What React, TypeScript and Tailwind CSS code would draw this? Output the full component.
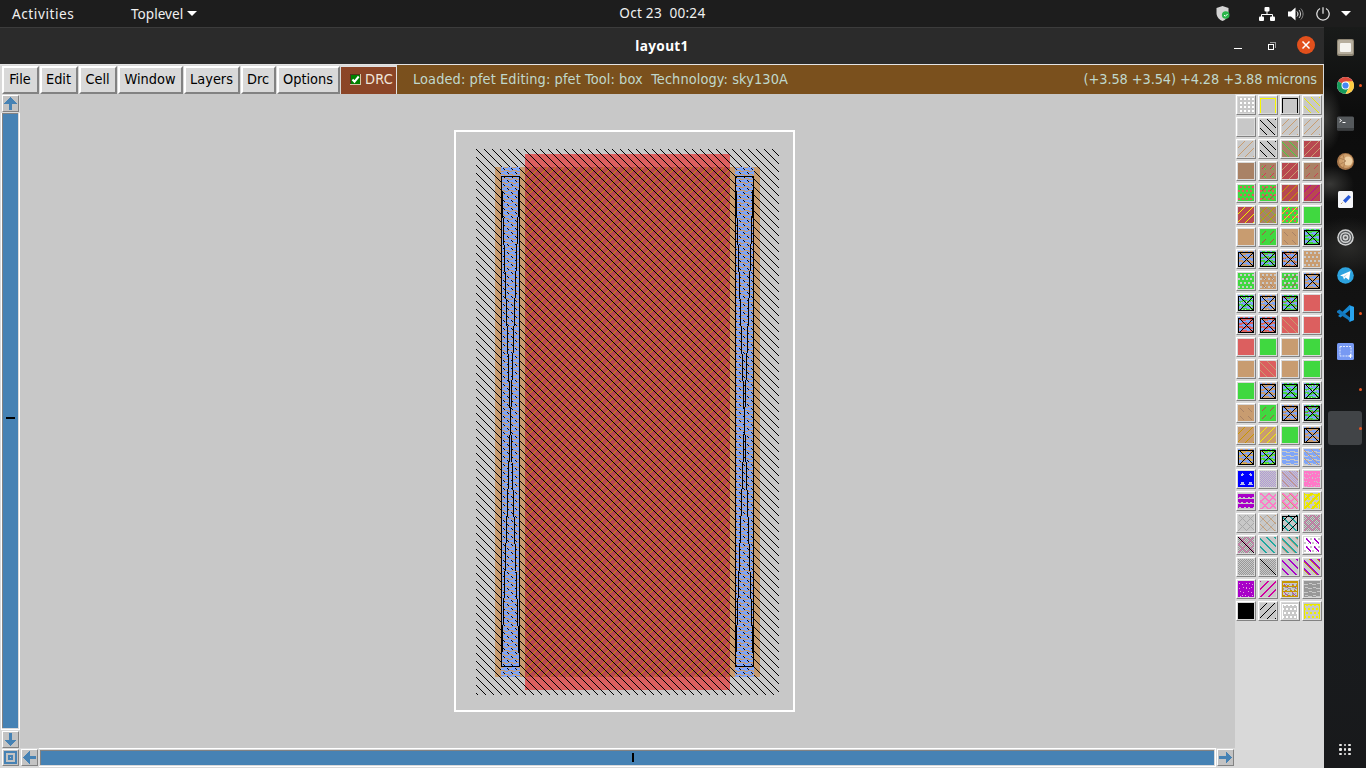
import React from "react";

type Test = (x: number, y: number) => boolean;
type Layer = [Test, string];

const GREY = "#c8c8c8";
const GREEN = "#40d840";
const TAN = "#c89c70";
const BROWN = "#a98266";
const RED = "#b84850";
const ROSE = "#dc5f5f";
const BLUE = "#7fa5f8";
const GOLD = "#c89600";
const YELLOW = "#f0f000";
const PURPLE = "#a800c8";
const PINK = "#ff78c8";
const TEAL = "#20a8a0";
const MID = "#989898";

const mod = (n: number, m: number) => ((n % m) + m) % m;
const back = (k = 7, w = 1, p = 8): Test => (x, y) => mod(x - y - k, p) < w;
const fwd = (k = 6, w = 1, p = 8): Test => (x, y) => mod(x + y - k, p) < w;
const shortFwd: Test = (x, y) => mod(x + y - 7, 8) === 0 && mod(x, 8) > 1 && mod(x, 8) < 6;
const shortBack: Test = (x, y) => mod(x - y - 7, 8) === 0 && mod(x, 8) > 1 && mod(x, 8) < 6;
const dots: Test = (x, y) => x % 4 >= 2 && y % 4 >= 1 && y % 4 <= 2;
const stagger: Test = (x, y) => mod(x + (Math.floor(y / 4) % 2) * 2, 4) >= 2 && (y + 3) % 4 < 2;
const wave: Test = (x, y) => {
  const s = x + (Math.floor(y / 4) % 2) * 4;
  return (y % 4 === 2 && s % 8 < 5) || (y % 4 === 3 && s % 8 >= 4);
};
const thickWave: Test = (x, y) => wave(x, y) || wave(x, y + 1);
const specks: Test = (x, y) => wave(x, y) && (x * 3 + y) % 5 < 2;
const checker: Test = (x, y) => (x + y) % 2 === 0;
const frame: Test = (x, y) => y === 1 || (y > 1 && (x === 0 || x === 15));
const box: Test = (x, y) => y === 1 || y === 15 || ((x === 0 || x === 15) && y >= 1);
const cross: Test = (x, y) => y >= 1 && (x === y || x + y === 16);
const hatch: Test = (x, y) => mod(x - y - 1, 8) === 0 || mod(x + y - 7, 8) === 0;
const thickHatch: Test = (x, y) => mod(x - y, 8) < 2 || mod(x + y, 8) < 2;
const one: Test = (x, y) => x === y;
const tri: Test = (x, y) => y % 8 > 1 && y % 8 < 6 && Math.abs((x % 8) - 4) < (y % 8) / 2 - 0.4;
const bars: Test = (x, y) => y % 5 === 0 || (y % 5 === 4 && (x * 7 + y) % 9 < 4);
const scatter: Test = (x, y) => (x * x + y * 5 + x * y) % 7 < 2;

const trace = (test: Test, size = 16) => {
  let d = "";
  for (let y = 0; y < size; y++)
    for (let x = 0; x < size; x++) if (test(x, y)) d += `M${x} ${y}h1v1h-1z`;
  return d;
};

const s = (base: string, ...layers: Layer[]) => ({ base, layers });
const c = (fill: string, ...extra: Layer[]) =>
  s(BLUE, [thickWave, fill], ...extra, [(x, y) => y < 1 && x % 5 > 1, fill], [box, "#000"], [cross, "#000"]);

const swatches = [
  s(GREY, [dots, "#fff"]), s(GREY, [frame, "#f8f800"]), s(GREY, [frame, "#000"]), s(GREY, [back(), "#e8e800"]),
  s(GREY), s(GREY, [back(), "#000"]), s(GREY, [fwd(), TAN]), s(GREY, [fwd(), TAN]),
  s(GREY, [fwd(), TAN]), s(GREY, [back(), "#000"]), s(BROWN, [back(), GREEN]), s(RED, [fwd(), TAN]),
  s(BROWN), s(BROWN, [shortBack, GREEN], [shortFwd, "#d04050"]), s(RED, [fwd(), TAN]), s(BROWN, [shortFwd, "#c84450"]),
  s(GREEN, [stagger, ROSE]), s(GREEN, [stagger, ROSE], [shortFwd, "#c04040"]), s(RED, [fwd(), GOLD]), s(RED, [fwd(), "#c000a0"]),
  s(RED, [fwd(), YELLOW]), s(BROWN, [fwd(), GOLD], [back(), "#78b840"]), s(GREEN, [stagger, ROSE], [fwd(), YELLOW]), s(GREEN),
  s(TAN), s(GREEN, [shortFwd, "#b84848"]), s(TAN, [shortBack, BROWN]), c(GREEN),
  c(TAN), c(GREEN, [specks, BROWN]), c(TAN, [specks, RED]), s(TAN, [stagger, GREY]),
  s(GREEN, [stagger, GREY]), s(TAN, [stagger, GREY], [shortBack, BROWN]), s(GREEN, [stagger, GREY], [shortFwd, RED]), c(TAN),
  c(GREEN, [specks, GREY]), c(TAN, [specks, GREY]), c(GREEN, [specks, ROSE]), s(ROSE),
  c(ROSE), c(ROSE, [specks, TAN]), s(ROSE, [back(), TAN]), s(ROSE),
  s(ROSE), s(GREEN), s(TAN), s(GREEN),
  s(TAN), s(ROSE, [back(), TAN]), s(TAN), s(GREEN),
  s(GREEN), c(TAN), c(GREEN), c(GREEN, [specks, GREY]),
  s(TAN, [shortBack, BROWN]), s(GREEN, [shortFwd, RED]), c(TAN, [specks, BROWN]), c(GREEN, [specks, RED]),
  s(TAN, [fwd(), GOLD]), s(TAN, [fwd(), YELLOW]), s(GREEN), c(TAN),
  c(TAN, [specks, "#e8c820"]), c(GREEN, [specks, "#c8e020"]), s(BLUE, [wave, GREY]), s(BLUE, [wave, GREY], [back(), TAN]),
  s("#0000ff", [tri, "#b8c0f0"], [bars, "#0000ff"]), s(GREY, [checker, "#b098d8"]), s(GREY, [checker, "#b098d8"], [back(), TAN]), s(PINK, [specks, GREY]),
  s(PURPLE, [bars, GREY]), s(GREY, [thickHatch, PINK]), s(GREY, [thickHatch, PINK], [back(), TAN]), s(GREY, [frame, "#e8e800"], [stagger, "#f0f000"], [fwd(6, 3), "#e8e000"]),
  s(GREY, [hatch, "#a8a8a8"]), s(GREY, [fwd(), "#b0b0b0"], [back(), TAN]), s(GREY, [back(6, 2), TEAL], [fwd(), "#000"], [frame, "#000"]), s(GREY, [checker, MID], [hatch, "#e070b0"]),
  s(GREY, [checker, MID], [hatch, "#e070b0"], [one, "#000"]), s(GREY, [back(6, 2), TEAL]), s(GREY, [back(6, 2), TEAL], [back(5), TAN]), s("#fff", [stagger, GREY], [back(7, 2), "#fff"], [(x, y) => mod(x - y, 8) < 2 && mod(x, 8) > 1 && mod(x, 8) < 7, PURPLE]),
  s(GREY, [checker, MID]), s(GREY, [checker, MID], [one, "#000"]), s(GREY, [back(6, 2), PURPLE]), s(GREY, [back(6, 2), PURPLE], [back(5), GOLD]),
  s(PURPLE, [(x, y) => specks(x, y) && x % 3 > 0, "#e0a0e0"]), s(GREY, [fwd(7, 2), "#d000a0"]), s(GREY, [scatter, MID], [shortBack, "#c040a0"], [frame, GOLD], [bars, GOLD]), s(GREY, [wave, MID], [(x, y) => y % 4 < 2, MID]),
  s("#000"), s(GREY, [fwd(), "#000"]), s(GREY, [stagger, "#fff"], [frame, "#fff"]), s(GREY, [stagger, YELLOW], [frame, "#e8e800"]),
];

function Swatch({ base, layers }: { base: string; layers: Layer[] }) {
  return (
    <div className="size-5 border border-t-white border-l-white border-r-[#828282] border-b-[#828282] bg-[#d9d9d9] p-px">
      <svg className="block size-4" viewBox="0 0 16 16" shapeRendering="crispEdges">
        <rect width="16" height="16" fill={base} />
        {layers.map(([test, color], i) => (
          <path key={i} d={trace(test)} fill={color} />
        ))}
      </svg>
    </div>
  );
}

function Contact({ x }: { x: number }) {
  return (
    <g>
      <rect x={x} y="167" width="19" height="510" fill={BLUE} />
      <rect x={x} y="167" width="19" height="510" fill="url(#metal)" />
      <g fill="none" stroke="#000">
        <rect x={x + 0.5} y="176.5" width="18" height="490" />
        <path d={`M${x + 0.5} 176.5L${x + 18.5} 666.5M${x + 18.5} 176.5L${x + 0.5} 666.5`} />
      </g>
    </g>
  );
}

function Canvas() {
  return (
    <svg className="block h-[654px] w-[1215px] bg-[#c8c8c8]" viewBox="20 94 1215 654" shapeRendering="crispEdges">
      <defs>
        <pattern id="well" width="8" height="8" patternUnits="userSpaceOnUse">
          <path d={trace(back(7), 8)} fill="#000" />
        </pattern>
        <pattern id="poly" width="8" height="8" patternUnits="userSpaceOnUse">
          <path d={trace(fwd(2), 8)} fill="#c88c00" />
        </pattern>
        <pattern id="metal" width="8" height="8" patternUnits="userSpaceOnUse">
          <path d={trace(wave, 8)} fill={TAN} />
          <path d={trace((x, y) => back(7)(x, y) && y % 4 < 2, 8)} fill="#000" />
        </pattern>
      </defs>
      <rect x="455" y="131" width="339" height="580" fill="none" stroke="#fff" strokeWidth="2" />
      <rect x="495" y="167" width="265" height="510" fill={TAN} />
      <rect x="525" y="154" width="205" height="536" fill={ROSE} />
      <rect x="525" y="167" width="205" height="510" fill={RED} />
      <rect x="525" y="167" width="205" height="510" fill="url(#poly)" />
      <rect x="476" y="149" width="303" height="546" fill="url(#well)" />
      <Contact x={501} />
      <Contact x={735} />
    </svg>
  );
}

const arrows: Record<string, string> = {
  up: "M7.5 1L14 7.5H9V14H6V7.5H1Z",
  down: "M7.5 14L14 7.5H9V1H6V7.5H1Z",
  left: "M1 7.5L7.5 1V6H14V9H7.5V14Z",
  right: "M14 7.5L7.5 1V6H1V9H7.5V14Z",
};

function ArrowButton({ kind }: { kind: string }) {
  return (
    <div className="size-[17px] shrink-0 border border-t-white border-l-white border-r-[#828282] border-b-[#828282] bg-[#c3c3c3]">
      <svg className="block size-[15px]" viewBox="0 0 15 15" shapeRendering="crispEdges">
        {kind === "zoom" ? (
          <g fill="none" stroke="#4682b4" strokeWidth="2">
            <rect x="2" y="2" width="11" height="11" />
            <rect x="6" y="6" width="3" height="3" />
          </g>
        ) : (
          <path d={arrows[kind]} fill="#4682b4" />
        )}
      </svg>
    </div>
  );
}

const menus = [
  { label: "File", size: "w-[37px]" },
  { label: "Edit", size: "w-[38px]" },
  { label: "Cell", size: "w-[38px]" },
  { label: "Window", size: "w-[65px]" },
  { label: "Layers", size: "w-[56px]" },
  { label: "Drc", size: "w-[35px]" },
  { label: "Options", size: "w-[63px]" },
];

function MenuBar() {
  return (
    <div className="flex h-[30px] items-stretch border-t border-[#e4e4e4] bg-[#d9d9d9] pt-px pr-px pl-[2px] font-['DejaVu_Sans_Condensed','DejaVu_Sans',sans-serif] text-[14.4px] [font-stretch:75%]">
      <div className="flex gap-px">
        {menus.map((m) => (
          <div key={m.label} className={`${m.size} flex items-center justify-center border-t-2 border-r-2 border-b-2 border-l-2 border-t-white border-l-white border-r-[#828282] border-b-[#828282] pr-px pb-px leading-none text-black`}>
            {m.label}
          </div>
        ))}
      </div>
      <div className="ml-px flex w-[56px] items-center gap-1 border-t border-r border-[#e0e0e0] bg-[#8b4527] pb-[3px] pl-[9px] text-[#f2e6da]">
        <svg className="size-[11px] shrink-0" viewBox="0 0 11 11">
          <rect width="11" height="11" fill="#d5c8a8" />
          <rect width="10" height="10" fill="#533018" />
          <rect x="1" y="1" width="9" height="9" fill="#008000" />
          <path d="M2.500 5.500l2 2.200L8.700 2.500" fill="none" stroke="#fff" strokeWidth="2" />
        </svg>
        <span className="leading-none tracking-[0.2px]">DRC</span>
      </div>
      <div className="-mt-px flex flex-1 items-center justify-between bg-[#7a501d] pt-px pr-[6px] pb-px pl-4 leading-none whitespace-pre text-[#c0d8cc]">
        <span className="tracking-[0.11px]">{"Loaded: pfet Editing: pfet Tool: box  Technology: sky130A"}</span>
        <span className="tracking-[-0.09px]">(+3.58 +3.54) +4.28 +3.88 microns</span>
      </div>
    </div>
  );
}

function TopBar() {
  return (
    <div className="grid h-[27px] grid-cols-3 items-center bg-[#1d1d1d] font-['Noto_Sans',sans-serif] text-[13.6px] leading-none text-[#f0f0f0]">
      <div className="flex items-center pl-3">
        <span className="w-[119px] tracking-[0.58px]">Activities</span>
        <span>Toplevel</span>
        <svg className="ml-1 h-[5px] w-[10px]" viewBox="0 0 10 5"><path d="M0 0h10L5 5z" fill="#fff" /></svg>
      </div>
      <div className="pb-px pl-[164px] tracking-[0.24px] whitespace-pre">{"Oct 23  00:24"}</div>
      <div className="flex items-center justify-end pr-[15px]">
        <svg className="mr-[29px] h-4 w-[14px]" viewBox="0 0 14 16">
          <path d="M6.500 0L12.500 2V7C12.500 11 9.500 14 6.500 15C3.500 14 .5 11 .5 7V2Z" fill="#d3d3d3" />
          <circle cx="9.700" cy="9" r="3.800" fill="#29b54a" />
          <path d="M8 9l1.300 1.300L11.600 8" fill="none" stroke="#fff" />
        </svg>
        <svg className="mr-[13px] h-[14px] w-4" viewBox="0 0 16 14">
          <path d="M8 4v4M2.500 10V7.500h11V10" fill="none" stroke="#fff" />
          <rect x="5.500" width="5" height="4.500" rx="1" fill="#fff" /><rect y="9.500" width="5" height="4.500" rx="1" fill="#fff" />
          <rect x="11" y="9.500" width="5" height="4.500" rx="1" fill="#fff" />
        </svg>
        <svg className="mr-3 h-[14px] w-4" viewBox="0 0 16 14" fill="none">
          <path d="M0 4.500h3L7.500.5v13L3 9.500H0z" fill="#fff" />
          <path d="M9 4.500c1.300 1.500 1.300 3.500 0 5" stroke="#fff" /><path d="M11 3c2 2.300 2 5.700 0 8" stroke="#d0d0d0" /><path d="M12.800 1.500c3 3.200 3 7.800 0 11" stroke="#888" />
        </svg>
        <svg className="mr-[11px] size-[14px]" viewBox="0 0 14 14" fill="none" stroke="#ddd" strokeWidth="1.300">
          <path d="M7 .3v6.500M4 1.500a6.200 6.200 0 1 0 6 0" />
        </svg>
        <svg className="h-[5px] w-[10px]" viewBox="0 0 10 5"><path d="M0 0h10L5 5z" fill="#fff" /></svg>
      </div>
    </div>
  );
}

function TitleBar() {
  return (
    <div className="grid h-[37px] grid-cols-3 items-center border-t border-[#3c3c3c] bg-[#2b2b2b]">
      <div />
      <div className="text-center font-['Noto_Sans',sans-serif] text-[13.6px] leading-none font-bold tracking-[0.35px] text-white">layout1</div>
      <div className="flex items-center justify-end pr-[9px]">
        <div className="mt-[4px] mr-[26px] h-px w-2 bg-white" />
        <svg className="mr-[21px] size-[8px]" viewBox="0 0 8 8" fill="none" shapeRendering="crispEdges">
          <path d="M2 .5h5.500V6" stroke="#999" /><rect x=".5" y="2.500" width="5" height="5" stroke="#fff" />
        </svg>
        <svg className="-mt-[2px] size-[18px]" viewBox="0 0 18 18"><circle cx="9" cy="9" r="9" fill="#e2501c" /><path d="M5.500 5.500l7 7M12.500 5.500l-7 7" stroke="#fff" strokeWidth="1.500" /></svg>
      </div>
    </div>
  );
}

const dockIcons: { art: React.ReactNode; running?: boolean }[] = [
  { art: <><rect x="0" y="0" width="17" height="17" rx="2" fill="#8f8775" /><rect x="1" y="1" width="15" height="14" rx="1.500" fill="#b6ae9e" /><rect x="3" y="4" width="11" height="9" rx="1" fill="#f5f4f0" /></> },
  {
    running: true,
    art: <><circle cx="8.500" cy="8.500" r="8.500" fill="#fff" /><path d="M8.500 8.500L1.140 4.250A8.500 8.500 0 0 1 15.860 4.250Z" fill="#dd4b3e" /><path d="M8.500 8.500L1.140 4.250A8.500 8.500 0 0 0 8.500 17L12 10.500Z" fill="#169b5a" /><path d="M8.500 4.250H15.860A8.500 8.500 0 0 1 8.500 17L12.200 10.500Z" fill="#ffcd42" /><circle cx="8.500" cy="8.500" r="4" fill="#fff" /><circle cx="8.500" cy="8.500" r="3.100" fill="#4587f4" /></>,
  },
  { art: <><rect x="0" y="1.500" width="17" height="14" rx="1.500" fill="#55595c" /><path d="M0 13h17v1c0 1-.5 1.500-1.500 1.500h-14C.5 15.500 0 15 0 14z" fill="#3c3f41" /><path d="M2.500 4l2 1.500-2 1.500M5.500 7.500h3" fill="none" stroke="#fff" /></> },
  { art: <><circle cx="8.500" cy="8.500" r="8.500" fill="#a7764a" /><circle cx="9" cy="8" r="7" fill="#cfa06d" /><circle cx="11" cy="8" r="4.500" fill="#eed0a5" /><path d="M2 5c4 1 5 2 7 3M2 12c3-2 5-3 7-4M6 2c2 5 2 10 0 13" fill="none" stroke="#9a6c42" strokeWidth=".6" /></> },
  { art: <><rect x="1" y="0" width="15" height="17" rx="1.500" fill="#f4f5f8" /><path d="M6 9.500L11.500 4L14 6L8.500 12Z" fill="#2859d7" /><path d="M4 13l1.500-1.500" stroke="#b99a72" /></> },
  { art: <><circle cx="8.500" cy="8.500" r="8.300" fill="#d2d3d3" /><circle cx="8.500" cy="8.500" r="6.200" fill="none" stroke="#55585a" strokeWidth="1.300" /><circle cx="8.500" cy="8.500" r="3.500" fill="none" stroke="#4c4f51" strokeWidth="1.200" /><circle cx="8.500" cy="8.500" r="1.300" fill="#555" /></> },
  { art: <><circle cx="8.500" cy="8.500" r="8.300" fill="#2da3df" /><path d="M3 8.500L13.500 4L12 13L8.500 10.500L7 12.500L6 9.500Z" fill="#fff" /><path d="M6.200 9.500L11 6.500L7.500 10.300z" fill="#b9d9ea" /></> },
  { running: true, art: <><path d="M12.500 0L17 2V15L12.500 17L11 14L13 12V5L3.500 12.500L1 11L10 2.500Z" fill="#1587d1" /><path d="M0 6L2.500 4.500L13 12.500V16L0 7.500Z" fill="#1478bd" /><path d="M13 1l4 1v13l-4 1.500z" fill="#29a4ef" /></> },
  { art: <><rect x="0" y="0" width="17" height="17" rx="1.500" fill="#7799f3" /><rect x="3" y="3.500" width="11" height="9.500" fill="none" stroke="#e4ecff" strokeDasharray="2 1" /><path d="M11.500 13h4M13.500 11v4" stroke="#fff" /></> },
];

function Dock() {
  return (
    <div className="flex w-[42px] shrink-0 flex-col bg-[radial-gradient(ellipse_18px_34px_at_0px_92px,#3b3b39,transparent),radial-gradient(ellipse_24px_18px_at_6px_157px,#383836,transparent),radial-gradient(ellipse_44px_30px_at_24px_220px,#2b2b29,transparent),linear-gradient(#191b1a,#0c0c0c_12%,#141414_45%,#191d20_60%,#18191b)] pt-[1.5px]">
      {dockIcons.map(({ art, running }, i) => (
        <div key={i} className="flex h-[38px] items-center pl-[12.5px]">
          <svg className="size-[17px]" viewBox="0 0 17 17">{art}</svg>
          {running && <span className="ml-[5.5px] size-[3px] rounded-full bg-[#e95420]" />}
        </div>
      ))}
      <div className="flex h-[38px] items-center pl-[35px]"><span className="size-[3px] rounded-full bg-[#e95420]" /></div>
      <div className="flex h-[38px] items-center pt-px pl-1">
        <div className="flex h-[34px] w-[34px] items-center justify-end rounded-[3px] bg-[#414447]"><span className="size-[3px] rounded-full bg-[#e95420]" /></div>
      </div>
      <div className="mt-auto mb-[13px] ml-[15px] grid w-3 grid-cols-3 gap-[2px]">
        {Array.from({ length: 9 }, (_, i) => <span key={i} className="size-[2.5px] rounded-[1px] bg-[#e8e8e8]" />)}
      </div>
    </div>
  );
}

export default function App() {
  return (
    <div className="flex h-[768px] w-[1366px] flex-col overflow-hidden bg-[#1d1d1d]">
      <TopBar />
      <div className="flex flex-1">
        <main className="flex w-[1324px] flex-col bg-[#d9d9d9]">
          <TitleBar />
          <MenuBar />
          <div className="flex flex-1">
            <div className="flex w-[1235px] flex-col">
              <div className="flex h-[654px]">
                <div className="flex w-5 flex-col pt-px">
                  <div className="pl-[2px]"><ArrowButton kind="up" /></div>
                  <div className="mt-px ml-px flex h-[617px] w-[19px] border-x border-b border-white pr-px pb-px">
                    <div className="flex flex-1 items-center justify-center border-t border-l border-[#828282] bg-[#4682b4]"><div className="mt-[-6px] h-[2px] w-[9px] bg-black" /></div>
                  </div>
                  <div className="pt-px pl-[2px]"><ArrowButton kind="down" /></div>
                </div>
                <Canvas />
              </div>
              <div className="flex h-5 items-start">
                <div className="flex gap-[2px] pt-px pl-[2px]">
                  <ArrowButton kind="zoom" />
                  <ArrowButton kind="left" />
                </div>
                <div className="ml-px flex h-[19px] w-[1177px] border-y border-r border-white py-px pr-px pl-px">
                  <div className="flex flex-1 justify-center border-t border-l border-[#828282] bg-[#4682b4] pt-[2px] pl-[11px]"><div className="h-[9px] w-[2px] bg-black" /></div>
                </div>
                <div className="pt-px pl-px"><ArrowButton kind="right" /></div>
              </div>
            </div>
            <div className="grid flex-1 auto-rows-[20px] grid-cols-[repeat(4,20px)] content-start gap-[2px] pt-px pl-px">
              {swatches.map((w, i) => <Swatch key={i} {...w} />)}
            </div>
          </div>
        </main>
        <Dock />
      </div>
    </div>
  );
}
